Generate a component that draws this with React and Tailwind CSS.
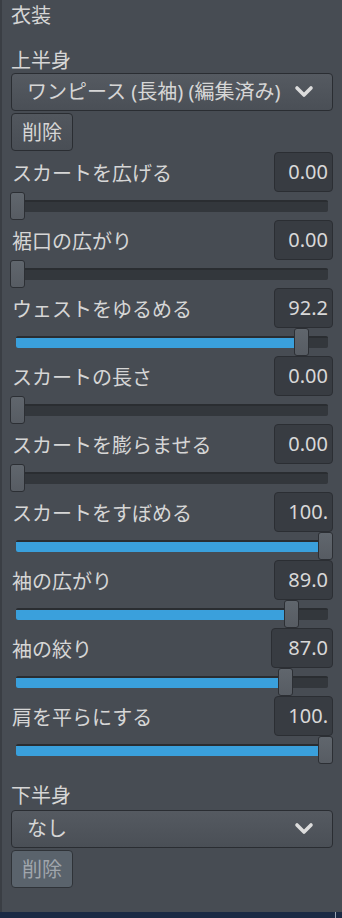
import React from 'react';

const font = { fontFamily: '"Noto Sans CJK JP", "Noto Sans", sans-serif' };

const sliders = [
    { label: 'スカートを広げる', text: '0.00', value: 0 },
    { label: '裾口の広がり', text: '0.00', value: 0 },
    { label: 'ウェストをゆるめる', text: '92.2', value: 92.2 },
    { label: 'スカートの長さ', text: '0.00', value: 0 },
    { label: 'スカートを膨らませる', text: '0.00', value: 0 },
    { label: 'スカートをすぼめる', text: '100.', value: 100 },
    { label: '袖の広がり', text: '89.0', value: 89 },
    { label: '袖の絞り', text: '87.0', value: 87, wide: true },
    { label: '肩を平らにする', text: '100.', value: 100 },
];

const Chevron = () => (
    <svg width="20" height="14" viewBox="0 0 20 14" className="shrink-0">
        <polyline points="3,3 10,10 17,3" fill="none" stroke="#dcdcdc" strokeWidth="3.6" strokeLinecap="round" strokeLinejoin="round" />
    </svg>
);

const Select = ({ value }) => (
    <div className="h-[38px] flex items-center justify-between pl-[15px] pr-[18px] rounded-[4px] border border-[#2a2d32] bg-gradient-to-b from-[#555a61] to-[#4a4f56] text-[20px] text-[#d6d6d6] leading-none">
        <span style={{ fontFamily: '"Noto Sans", "Noto Sans CJK JP", sans-serif' }}>{value}</span>
        <Chevron />
    </div>
);

const DeleteButton = ({ disabled }) => (
    <div
        className={
            disabled
                ? 'mt-[2px] w-[62px] h-[38px] flex items-center justify-center rounded-[4px] border border-[#2f3338] bg-[#5a636c] text-[20px] text-[#a0a6ac] leading-none'
                : 'mt-[2px] w-[62px] h-[38px] flex items-center justify-center rounded-[4px] border border-[#2a2d32] bg-gradient-to-b from-[#52575e] to-[#494e55] text-[20px] text-[#d6d6d6] leading-none'
        }
    >
        削除
    </div>
);

const SliderRow = ({ label, text, value, wide }) => {
    const left = -1 + (value / 100) * 308;
    return (
        <div>
            <div className="h-[40px] flex items-center justify-between">
                <span className="text-[20px] text-[#d6d6d6] leading-none pl-[1px] pt-[2px]">{label}</span>
                <div
                    className={
                        (wide ? 'w-[62px] ' : 'w-[59px] ') +
                        'h-[40px] flex items-center justify-end pr-[4px] rounded-[4px] border border-[#2b2e33] bg-[#383c42] text-[20px] text-[#d8d8d8] leading-none'
                    }
                    style={{ fontFamily: '"Noto Sans", sans-serif' }}
                >
                    {text}
                </div>
            </div>
            <div className="relative h-[28px]">
                <div className="absolute left-[5px] right-[5px] top-[8px] h-[12px] rounded-[2px] bg-[#33373c] border-t-2 border-[#2a2d31] overflow-hidden">
                    <div className="h-full bg-[#3aa0dc]" style={{ width: Math.max(0, left - 5) + 'px' }} />
                </div>
                <div
                    className="absolute top-0 w-[15px] h-[28px] rounded-[3px] border border-[#2c2f34] bg-gradient-to-b from-[#60666d] to-[#575c63]"
                    style={{ left: left + 'px' }}
                />
            </div>
        </div>
    );
};

export default function App() {
    return (
        <div className="w-[342px] h-[918px] bg-[#474c53] flex flex-col overflow-hidden" style={font}>
            <div className="flex-1 border-l-2 border-[#3a3e44] pl-[9px] pr-[9px]">
                {/* 衣装 */}
                <div className="h-[30px] flex items-center text-[20px] text-[#d6d6d6] leading-none">衣装</div>

                {/* 上半身 */}
                <div className="mt-[17px] h-[26px] flex items-center text-[20px] text-[#d6d6d6] leading-none">上半身</div>
                <Select value="ワンピース (長袖) (編集済み)" />
                <DeleteButton />

                <div className="mt-[1px]">
                    {sliders.map((s) => (
                        <SliderRow key={s.label} {...s} />
                    ))}
                </div>

                {/* 下半身 */}
                <div className="mt-[18px] h-[26px] flex items-center text-[20px] text-[#d6d6d6] leading-none">下半身</div>
                <div className="mt-[2px]">
                    <Select value="なし" />
                </div>
                <DeleteButton disabled />
            </div>
            <div className="h-[6px] bg-[#1b2a44] flex justify-end pr-[6px]">
                <div className="w-[1px] h-full bg-[#9aa3b3]" />
            </div>
        </div>
    );
}
